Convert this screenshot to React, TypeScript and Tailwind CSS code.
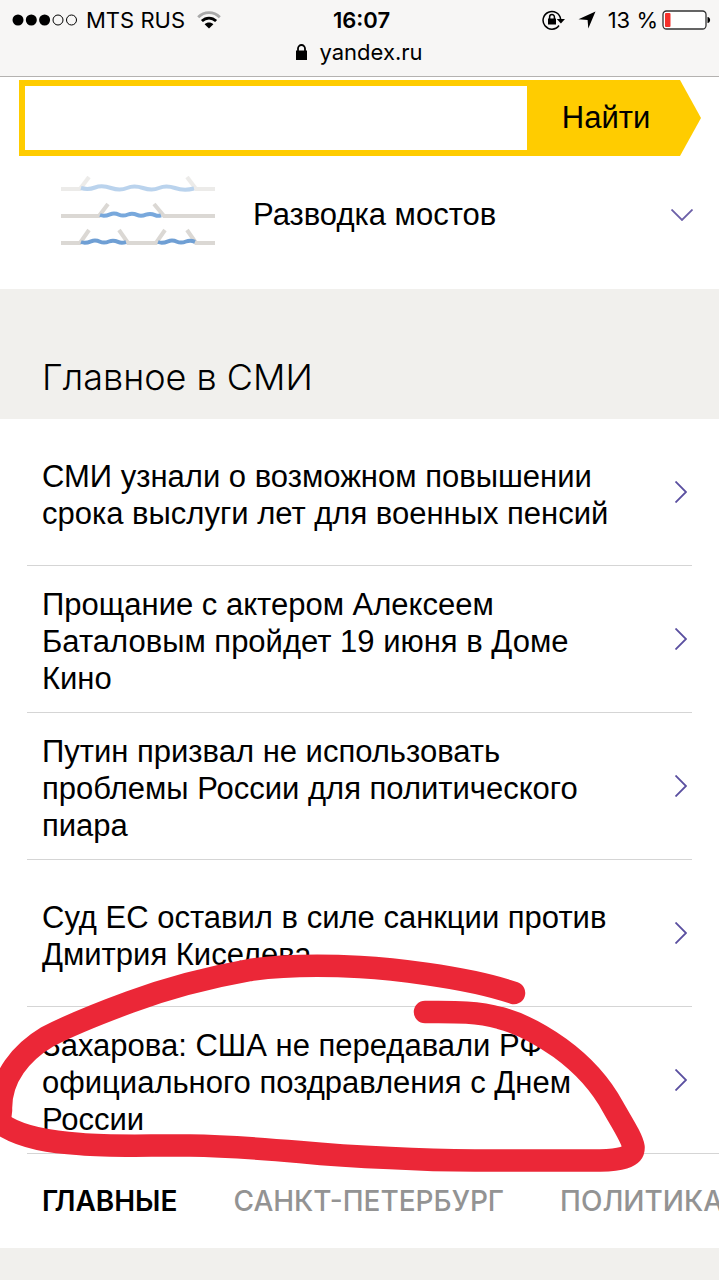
const news = [
  "СМИ узнали о возможном повышении срока выслуги лет для военных пенсий",
  "Прощание с актером Алексеем Баталовым пройдет 19 июня в Доме Кино",
  "Путин призвал не использовать проблемы России для политического пиара",
  "Суд ЕС оставил в силе санкции против Дмитрия Киселева",
  "Захарова: США не передавали РФ официального поздравления с Днем России",
];

const tabs = ["ГЛАВНЫЕ", "САНКТ-ПЕТЕРБУРГ", "ПОЛИТИКА"];

const StatusBar = () => {
  return (
    <header className="border-b border-[#b4b2b0] bg-[#f7f6f5] h-[77px] pt-2 font-['Inter',sans-serif] text-[22px] leading-6 text-black">
      <div className="grid grid-cols-[1fr_auto_1fr] items-center pl-3 pr-2">
        <div className="flex items-center">
          <svg width="66" height="14" viewBox="0 0 66 14" className="mr-2">
            <circle cx="6" cy="7" r="5.5" />
            <circle cx="19.3" cy="7" r="5.5" />
            <circle cx="32.6" cy="7" r="5.5" />
            <circle cx="46" cy="7" r="5" fill="none" stroke="black" />
            <circle cx="59.5" cy="7" r="5" fill="none" stroke="black" />
          </svg>
          <span>MTS RUS</span>
          <svg width="24" height="18" viewBox="0 0 24 18" fill="none" strokeWidth="2.8" className="ml-3">
            <path d="M1.2 6.2C7.2 0 16.8 0 22.8 6.2" stroke="#a9a9a9" />
            <path d="M4.9 10.1C9 6 15 6 19.1 10.1" stroke="black" />
            <path d="M12 17.6L7.6 13.2C10 11 14 11 16.4 13.2Z" fill="black" />
          </svg>
        </div>
        <span className="font-semibold">16:07</span>
        <div className="flex items-center justify-end">
          <svg width="24" height="20" viewBox="0 0 24 20" className="mr-3">
            <path d="M17 15.5A8.8 8.8 0 1 1 18.6 9.2" fill="none" stroke="black" strokeWidth="1.5" />
            <path d="M14.8 9H23L18.9 13.4Z" />
            <path d="M6 8.500h8v6H6z" />
            <path d="M7.6 9.5V7a2.4 2.4 0 0 1 4.8 0v2.500" fill="none" stroke="black" strokeWidth="1.5" />
          </svg>
          <svg width="18" height="18" viewBox="0 0 18 18" className="mr-3">
            <path d="M17.500 0.500L10.300 17.500L9.600 9L0.500 8.200Z" />
          </svg>
          <span className="mr-1">13 %</span>
          <svg width="49" height="20" viewBox="0 0 49 20">
            <rect x="1" y="1" width="43" height="18" rx="3.500" fill="white" stroke="#333" strokeWidth="1.300" />
            <rect x="3" y="3" width="5.500" height="14" rx="1" fill="#f6302b" />
            <path d="M45.500 7c3.500 0 3.500 6 0 6z" />
          </svg>
        </div>
      </div>
      <div className="mt-2 flex items-center justify-center gap-3">
        <svg width="11" height="16" viewBox="0 0 11 16">
          <path d="M0 6.500h11V16H0z" />
          <path d="M2 7.500V4.500a3.500 3.500 0 0 1 7 0v3" fill="none" stroke="black" strokeWidth="1.800" />
        </svg>
        <span>yandex.ru</span>
      </div>
    </header>
  );
};

const SearchForm = () => {
  return (
    <form className="flex h-[76px] ml-[19px] mr-[18px] mt-[3px]" onSubmit={(e) => e.preventDefault()}>
      <input
        type="text"
        aria-label="Поиск"
        className="min-w-0 flex-1 border-6 border-r-0 border-[#ffcc00] bg-white px-4 text-[31px] outline-none"
      />
      <button
        type="submit"
        className="w-[174px] bg-[#ffcc00] pr-4 text-[31px] text-black [clip-path:polygon(0_0,153px_0,100%_50%,153px_100%,0_100%)]"
      >
        Найти
      </button>
    </form>
  );
};

const BridgesIcon = () => {
  return (
    <svg width="154" height="78" viewBox="0 0 154 78" fill="none" strokeWidth="4">
      <g opacity="0.5">
        <path d="M0 13H19L28 1M154 13H135L126 1" stroke="#dbd8d4" />
        <path d="M20 12q7 2 14-.5t16 .5t16 0t16 0t16 0t16 0t19 .5" stroke="#78a8dc" />
      </g>
      <path d="M0 40H38L47 28M154 40H103L93 28" stroke="#dbd8d4" />
      <path d="M39 39c4 1.500 7 .5 10-.7s6-1 9 .4 6 1 9-.2 6-1 9 .4 6 1 9-.2 6-1 9 .4 4 1 6 .2" stroke="#78a8dc" />
      <path d="M0 67H19L28 54M58 54L67 67H95L104 54M126 54L135 67H154" stroke="#dbd8d4" />
      <path d="M20 66c4 1.500 7 .5 10-.7s6-1 9 .4 6 1 9-.2 6-1 9 .4 5 1 8 .2M97 66c4 1.500 7 .5 10-.7s6-1 9 .4 6 1 9-.2 6-1 9 .3" stroke="#6f9fd4" />
    </svg>
  );
};

const App = () => {
  return (
    <div className="min-h-screen overflow-hidden bg-[#f1f0ed] font-['Liberation_Sans',Arial,sans-serif] text-black">
      <StatusBar />

      <div className="flow-root bg-white">
        <SearchForm />
        <button type="button" className="flex w-full items-center pl-[61px] pr-[26px] pt-5 pb-[35px] text-left text-[31px]">
          <BridgesIcon />
          <span className="ml-[38px] flex-1">Разводка мостов</span>
          <svg width="22" height="12" viewBox="0 0 22 12" fill="none" stroke="#6c60a8" strokeWidth="1.800">
            <path d="M0.500 0.500L11 11L21.500 0.500" />
          </svg>
        </button>
      </div>

      <h2 className="px-[42px] pt-[68px] pb-[22px] font-['Inter',sans-serif] text-[36px] leading-10 font-light">
        Главное в СМИ
      </h2>

      <section className="relative bg-white">
        <ul className="ml-[27px]">
          {news.map((title, i) => (
            <li
              key={title}
              className={`border-b border-[#d5d5d5] ${i === news.length - 1 ? "" : "mr-[27px]"}`}
            >
              <a
                href="#"
                className={`flex min-h-[146px] items-center gap-10 pl-[15px] ${i === news.length - 1 ? "pr-8" : "pr-[5px]"}`}
              >
                <span className="flex-1 pt-[5px] text-[31px] leading-[37px]">{title}</span>
                <svg width="12" height="22" viewBox="0 0 12 22" fill="none" stroke="#5a4fa0" strokeWidth="1.800">
                  <path d="M0.500 0.500L11 11L0.500 21.500" />
                </svg>
              </a>
            </li>
          ))}
        </ul>

        <nav className="flex gap-14 overflow-hidden pl-[42px] pt-[31px] pb-[31px] text-[28px] leading-8 whitespace-nowrap font-['Inter',sans-serif]">
          {tabs.map((tab, i) => (
            <a key={tab} href="#" className={i === 0 ? "font-semibold" : "font-medium text-[#939393]"}>
              {tab}
            </a>
          ))}
        </nav>

        {/* marker circle around the last story */}
        <svg
          viewBox="0 950 719 230"
          className="pointer-events-none absolute inset-x-0 bottom-[68px] w-full"
          fill="none"
          stroke="#eb2737"
          strokeWidth="22.500"
          strokeLinecap="round"
          strokeLinejoin="round"
        >
          <path d="M514 993C485 983 455 978 427 974C400 970 380 968 360 967C320 965 285 965 250 970C205 978 165 989 130 1002C100 1013 70 1025 47 1037C22 1052 0 1077 1 1110C0 1119 -1 1122 6 1127C25 1138 50 1142 80 1144C115 1147 150 1145 190 1145.500C230 1146 265 1149 300 1152C340 1156 365 1157 390 1158C425 1160 450 1160.500 475 1160.500L600 1160.500C618 1160 634 1158 633.500 1147C632 1138 622 1123 613 1107C600 1083 582 1064 560 1048C540 1034 520 1023 500 1018C475 1011 450 1012 425 1012" />
        </svg>
      </section>
    </div>
  );
};

export default App;
